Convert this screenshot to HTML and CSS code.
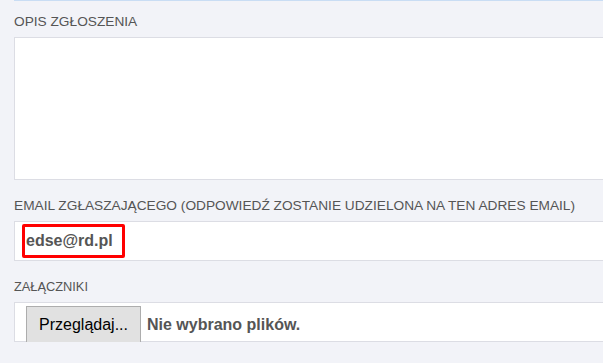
FILE: index.html
```html
<!DOCTYPE html>
<html lang="pl">
<head>
  <meta charset="UTF-8">
  <meta name="viewport" content="width=device-width, initial-scale=1.0">
  <title>Zgłoszenie</title>
  <link rel="stylesheet" href="styles.css">
</head>
<body>
  <div class="form">
    <div class="prev-field"></div>

    <!-- opis -->
    <div class="group">
      <label class="label">OPIS ZGŁOSZENIA</label>
      <div class="textarea"></div>
    </div>

    <!-- email -->
    <div class="group">
      <label class="label">EMAIL ZGŁASZAJĄCEGO (ODPOWIEDŹ ZOSTANIE UDZIELONA NA TEN ADRES EMAIL)</label>
      <div class="input">
        <span class="email-mark">edse@rd.pl</span>
      </div>
    </div>

    <!-- załączniki -->
    <div class="group">
      <label class="label label-small">ZAŁĄCZNIKI</label>
      <div class="file-input">
        <button class="file-button">Przeglądaj...</button>
        <span class="file-name">Nie wybrano plików.</span>
      </div>
    </div>
  </div>
</body>
</html>
```

FILE: styles.css
```css
body {
    margin: 0;
    background: #f2f3f8;
    font-family: "Liberation Sans", Arial, sans-serif;
    overflow: hidden;
}
.form {
    padding-left: 14px;
    width: 640px;
}
.prev-field {
    height: 1px;
    background: #c9ddf4;
}
.group {
    margin-top: 12px;
}
.group + .group {
    margin-top: 17px;
}
.label {
    display: block;
    font-size: 13.7px;
    line-height: 18px;
    color: #555;
    margin-bottom: 6px;
}
.label-small {
    font-size: 12.8px;
}
.textarea {
    height: 141px;
    background: #fff;
    border: 1px solid #dcdde4;
}
.input {
    height: 38px;
    background: #fff;
    border: 1px solid #dcdde4;
    display: flex;
    align-items: center;
    padding-left: 7px;
}
.email-mark {
    border: 3px solid #f00;
    border-radius: 2px;
    padding: 4px 9px 4px 1px;
    font-size: 16px;
    font-weight: bold;
    line-height: 20px;
    color: #555;
}
.file-input {
    height: 38px;
    background: #fff;
    border: 1px solid #dcdde4;
    display: flex;
    align-items: flex-start;
    gap: 6px;
    padding-left: 11px;
}
.file-button {
    margin-top: 3px;
    height: 37px;
    width: 115px;
    background: #e1e1e1;
    border: 1px solid #adadad;
    font-family: "Liberation Sans", Arial, sans-serif;
    font-size: 16px;
    color: #000;
    padding: 0;
}
.file-name {
    line-height: 44px;
    font-size: 16px;
    font-weight: bold;
    color: #555;
}
```
